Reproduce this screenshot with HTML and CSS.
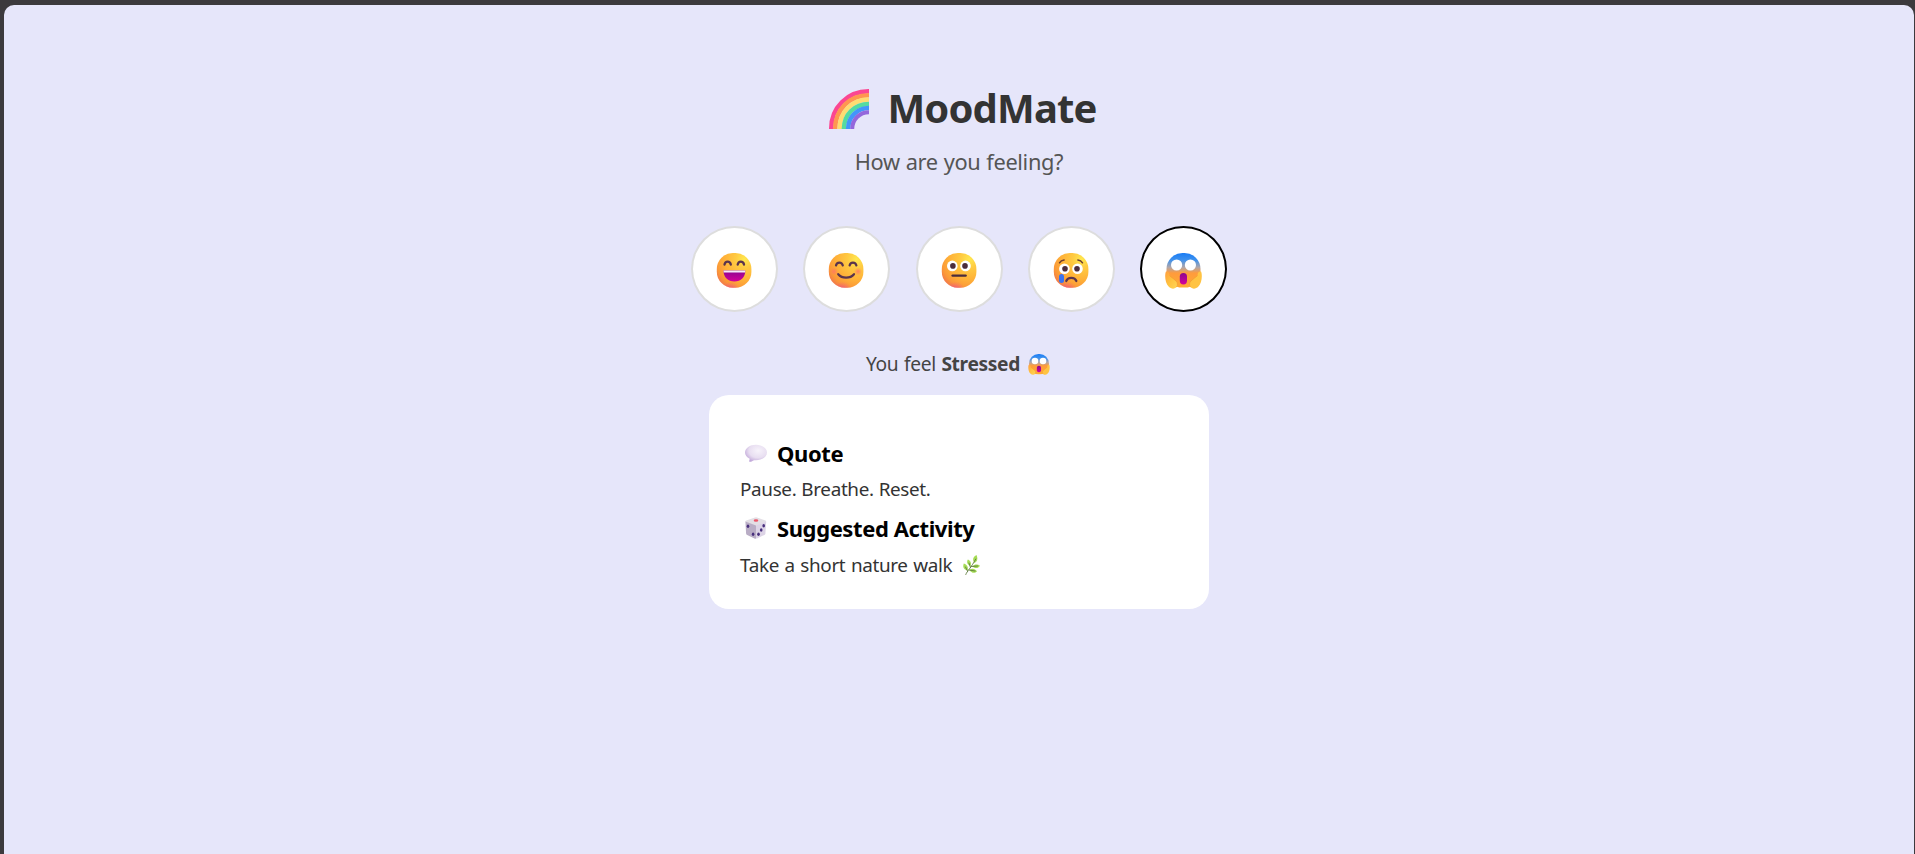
FILE: index.html
```html
<!DOCTYPE html>
<html lang="en">
<head>
<meta charset="utf-8">
<title>MoodMate</title>
<link rel="stylesheet" href="styles.css">
</head>
<body>
<svg class="defs" width="0" height="0" aria-hidden="true">
  <defs>
    <radialGradient id="skin" cx="0.8" cy="0.18" r="1">
      <stop offset="0" stop-color="#ffe84f"/><stop offset="0.25" stop-color="#ffcb42"/><stop offset="0.6" stop-color="#ffb038"/><stop offset="0.82" stop-color="#fb9838"/><stop offset="1" stop-color="#ee6f50"/>
    </radialGradient>
    <radialGradient id="glow" cx="0.4" cy="1.1" r="0.28">
      <stop offset="0" stop-color="#f0459a" stop-opacity=".8"/><stop offset="1" stop-color="#f0459a" stop-opacity="0"/>
    </radialGradient>
    <linearGradient id="mouth" x1="0" y1="0" x2="0" y2="1">
      <stop offset="0" stop-color="#8b068f"/><stop offset="1" stop-color="#d3009b"/>
    </linearGradient>
    <linearGradient id="fear" x1="0" y1="0" x2="0" y2="1">
      <stop offset="0" stop-color="#1a7cf5"/><stop offset="0.2" stop-color="#3d91ee"/><stop offset="0.42" stop-color="#b3a6a6"/><stop offset="0.58" stop-color="#ff9b3c"/><stop offset="1" stop-color="#ffab33"/>
    </linearGradient>
    <linearGradient id="hand" x1="0" y1="0" x2="1" y2="1">
      <stop offset="0" stop-color="#ff9f3e"/><stop offset="0.5" stop-color="#ffc23f"/><stop offset="1" stop-color="#ffd65a"/>
    </linearGradient>
    <radialGradient id="blush"><stop offset="0" stop-color="#ff7468" stop-opacity=".8"/><stop offset="1" stop-color="#ff7468" stop-opacity="0"/></radialGradient>
    <radialGradient id="bubble" cx="0.6" cy="0.35" r="0.7">
      <stop offset="0" stop-color="#f7f3fb"/><stop offset="0.6" stop-color="#e8def1"/><stop offset="1" stop-color="#bfa5d8"/>
    </radialGradient>
    <g id="ball">
      <rect x="-.2" y="0" width="34.600" height="34.800" rx="16" fill="url(#skin)"/>
      <rect x="-.2" y="0" width="34.600" height="34.800" rx="16" fill="url(#glow)"/>
    </g>
    <symbol id="scream" viewBox="0 0 37 36">
      <rect x="1.500" y="0" width="34" height="34.600" rx="16" fill="url(#fear)"/>
      <circle cx="11.600" cy="12" r="5.600" fill="#fff"/><circle cx="25.400" cy="12" r="5.600" fill="#fff"/>
      <rect x="14.800" y="20" width="7.200" height="11.400" rx="3.600" fill="url(#mouth)"/>
      <path d="M.8 18.800c2.200-.8 3.500.6 3.700 3.800l6.400 5.200c2.400 2.300 2.200 5.200.2 6.800-2.200 1.800-5.200 1.200-7.500-1C.4 30.500-.6 22.500.8 18.800z" fill="url(#hand)"/>
      <path d="M36.200 18.800c-2.200-.8-3.500.6-3.700 3.800l-6.400 5.200c-2.400 2.300-2.200 5.200-.2 6.800 2.200 1.800 5.200 1.200 7.500-1 3.200-3.100 4.200-11.100 2.800-14.800z" fill="#ffc342"/>
      <path d="M4.500 22.600l6.400 5.200c2 2 1.900 4.400.7 6.200M32.500 22.600l-6.400 5.200c-2 2-1.900 4.400-.7 6.200" fill="none" stroke="#f09a30" stroke-width=".7"/>
    </symbol>
  </defs>
</svg>
<main class="app">
  <h1 class="title">
    <svg class="title-icon" viewBox="0 0 40 40">
      <g fill="none" stroke-width="4.500">
        <path d="M2.200 39.500C2.200 18.500 18.500 2.200 39.500 2.200" stroke="#fb4692" stroke-linecap="round" stroke-width="4.400"/>
        <path d="M6.200 40C6.200 20.500 20.500 6.200 40 6.200" stroke="#ff9650"/>
        <path d="M10.600 40C10.600 23 23 10.600 40 10.600" stroke="#ffdc72"/>
        <path d="M14.900 40C14.900 25.500 25.500 14.900 40 14.900" stroke="#55dba0"/>
        <path d="M19.100 40C19.100 28 28 19.100 40 19.100" stroke="#4396fa"/>
        <path d="M23.200 40C23.200 30.500 30.500 23.200 40 23.200" stroke="#9467dc" stroke-width="4"/>
      </g>
    </svg>
    <span>MoodMate</span>
  </h1>
  <p class="subtitle">How are you feeling?</p>
  <div class="moods">
    <button class="mood" aria-label="Great">
      <svg class="face" viewBox="0 0 34 35"><use href="#ball"/>
        <path d="M7.500 11.500c.7-3.800 5.500-3.800 6.300 0M20.700 11.500c.7-3.800 5.500-3.800 6.300 0" fill="none" stroke="#5a344d" stroke-width="2.300" stroke-linecap="round"/>
        <path d="M6.500 17.500h21.800c0 6.700-4.300 11-10.900 11S6.500 24.200 6.500 17.500z" fill="url(#mouth)"/><path d="M6.500 17.500h21.800l-.2 2H6.700z" fill="#f5e9fb"/>
      </svg>
    </button>
    <button class="mood" aria-label="Happy">
      <svg class="face" viewBox="0 0 34 35"><use href="#ball"/>
        <circle cx="5" cy="18.500" r="4" fill="url(#blush)"/><circle cx="29" cy="18.500" r="4" fill="url(#blush)"/>
        <path d="M7 12.500c.7-3.900 6-3.900 6.800 0M20.600 12.500c.7-3.900 6-3.900 6.800 0M9.200 21.200c3.800 4.600 12 4.600 15.800 0" fill="none" stroke="#5a344d" stroke-width="2.200" stroke-linecap="round"/>
      </svg>
    </button>
    <button class="mood" aria-label="Neutral">
      <svg class="face" viewBox="0 0 34 35"><use href="#ball"/>
        <circle cx="10.300" cy="12.900" r="5.300" fill="#fff"/><circle cx="23.500" cy="12.900" r="5.300" fill="#fff"/>
        <circle cx="10.900" cy="12.900" r="2.800" fill="#4b2c3c"/><circle cx="23" cy="12.900" r="2.800" fill="#4b2c3c"/>
        <path d="M10.600 22.600h13" stroke="#4b2c3c" stroke-width="2.400" stroke-linecap="round"/>
      </svg>
    </button>
    <button class="mood" aria-label="Sad">
      <svg class="face" viewBox="0 0 34 35"><use href="#ball"/>
        <circle cx="10.400" cy="15.800" r="5.300" fill="#fff"/><circle cx="23.500" cy="15.800" r="5.300" fill="#fff"/>
        <circle cx="11" cy="15.800" r="2.800" fill="#4b2c3c"/><circle cx="23" cy="15.800" r="2.800" fill="#4b2c3c"/>
        <path d="M5.500 9.800c1-1.700 2.500-2.600 4.600-2.800M28.500 9.800c-1-1.700-2.500-2.600-4.600-2.800" fill="none" stroke="#6b3b30" stroke-width="1.500" stroke-linecap="round"/>
        <path d="M12.200 28c1.600-4.200 8.600-4.200 10.200 0" fill="none" stroke="#5a344d" stroke-width="2.200" stroke-linecap="round"/>
        <rect x="5" y="21" width="5" height="9" rx="2.500" fill="#3b72ee"/>
      </svg>
    </button>
    <button class="mood selected" aria-label="Stressed"><svg class="face scream"><use href="#scream"/></svg></button>
  </div>
  <p class="feeling"><span>You feel <strong>Stressed</strong></span><svg class="feeling-icon"><use href="#scream"/></svg></p>
  <section class="card">
    <h2 class="heading">
      <svg class="heading-icon" viewBox="0 0 22 22"><path d="M11 2.700C17 2.700 22 6.100 22 10.500s-5 7.800-11 7.800c-.7 0-1.300 0-2-.1-1.400 1-3 1.700-4.500 1.500-.8-.2 0-1.300.2-3C1.800 15.300 0 13.100 0 10.500 0 6.100 5 2.700 11 2.700z" fill="url(#bubble)"/></svg>
      <span>Quote</span>
    </h2>
    <p class="copy quote">Pause. Breathe. Reset.</p>
    <h2 class="heading">
      <svg class="heading-icon" viewBox="0 0 22 22">
        <path d="M10 .4q1-.4 2 0l8.500 3.200q.8.400.5 1.400L11 9 .4 5q0-1 .8-1.400z" fill="#e3dfe5"/>
        <path d="M.4 4.600 11 8.400v13.200q-.8.200-1.500-.2L2.200 18q-1-.5-1.100-1.600z" fill="#b9adc5"/>
        <path d="M11 8.400 21.200 4.600l-.8 11.800q-.1 1-1 1.500L12 21.500l-1 .1z" fill="#ddd4e6"/>
        <ellipse cx="11" cy="3.500" rx="2.300" ry="1.200" fill="#ec5568"/>
        <g fill="#482f7c"><ellipse cx="3" cy="9.200" rx="1.300" ry="1.800"/><ellipse cx="8.100" cy="17.300" rx="1.300" ry="1.800"/><ellipse cx="18.700" cy="8.700" rx="1.300" ry="1.800"/><ellipse cx="16.200" cy="13" rx="1.300" ry="1.800"/><ellipse cx="13.500" cy="17.300" rx="1.300" ry="1.800"/></g>
      </svg>
      <span>Suggested Activity</span>
    </h2>
    <p class="copy activity"><span>Take a short nature walk</span>
      <svg class="herb" viewBox="0 0 17 20">
        <g fill="#a5dc55"><path d="M11.500 8C9 5 10 1.500 13.500 0c1.500 3.500 1 6.500-2 8z"/><path d="M7.500 11C4 9.500 3.500 7 4.800 4.500 8 6 8.500 8.500 7.500 11z"/><path d="M4.500 15.500C.5 14.500-.5 12 .8 8.500 4.500 10 5.500 12.500 4.500 15.500z"/><path d="M9.500 11.500c2-2.500 5-2.500 7.500-.8-2 2.800-4.500 3.100-7.500.8z"/><path d="M6.500 15c2.500-2 5.500-1.500 7.500 1.300-2.500 2.500-5.500 1.800-7.500-1.300z"/></g>
        <path d="M2.800 19.500C4 16 8 13 12.800 4M7.500 12.500 6 8M4.500 16 2.500 12M8.500 11.500l6-.5M6 15l6 1" fill="none" stroke="#5d7b3c" stroke-width=".9" stroke-linecap="round"/>
      </svg>
    </p>
  </section>
</main>
</body>
</html>
```

FILE: styles.css
```css
* { box-sizing: border-box; }
html, body { margin: 0; height: 100%; }
body {
  background: #3c3a3d;
  padding: 5px 1px 0 4px;
  overflow: hidden;
  font-family: "Noto Sans", "Open Sans", sans-serif;
}
.defs { display: block; height: 0; }
.app {
  height: 100%;
  background: #e6e6fa;
  border-radius: 10px 10px 0 0;
  padding-top: 76px;
  display: flex;
  flex-direction: column;
  align-items: center;
}
h1, h2, p { margin: 0; white-space: nowrap; }
svg { display: block; flex: none; overflow: visible; }
.title {
  display: flex;
  align-items: center;
  gap: 18px;
  padding-left: 8px;
  height: 54px;
  line-height: 54px;
  font-size: 40px;
  color: #333;
  letter-spacing: -0.85px;
}
.title-icon { width: 40px; height: 40px; margin-top: 2px; overflow: hidden; }
.subtitle {
  margin-top: 12px;
  line-height: 30px;
  font-size: 21.800px;
  color: #555;
  letter-spacing: -0.35px;
  word-spacing: 0.600px;
}
.moods { display: flex; gap: 25.300px; margin-top: 49px; }
.mood {
  display: flex;
  align-items: center;
  justify-content: center;
  width: 87px;
  height: 86px;
  padding: 2px 1px 0 0;
  border: 2px solid #ddd;
  border-radius: 50%;
  background: #fff;
}
.selected { border-color: #000; padding-top: 3px; }
.face { width: 34px; height: 35px; }
.scream { width: 37px; height: 36px; }
.feeling {
  display: flex;
  align-items: center;
  gap: 8px;
  margin-top: 39px;
  padding-right: 2px;
  height: 26px;
  line-height: 26px;
  font-size: 19.200px;
  color: #444;
  letter-spacing: -0.35px;
  word-spacing: 1px;
}
.feeling-icon { width: 22px; height: 21px; }
.card {
  width: 500px;
  height: 214px;
  margin-top: 18px;
  padding: 43px 32px 0 31px;
  border-radius: 20px;
  background: #fff;
}
.heading {
  display: flex;
  align-items: center;
  gap: 10px;
  padding-left: 5px;
  height: 30px;
  line-height: 30px;
  font-size: 22px;
  color: #000;
  letter-spacing: -0.400px;
}
.heading-icon { width: 22px; height: 22px; }
.copy { height: 26px; line-height: 26px; font-size: 18.900px; color: #333; letter-spacing: -0.35px; word-spacing: 0.400px; }
.quote { margin: 8px 0 11px; }
.activity { display: flex; align-items: center; gap: 11px; margin-top: 9px; word-spacing: 1px; }
.herb { width: 17px; height: 20px; }
```
